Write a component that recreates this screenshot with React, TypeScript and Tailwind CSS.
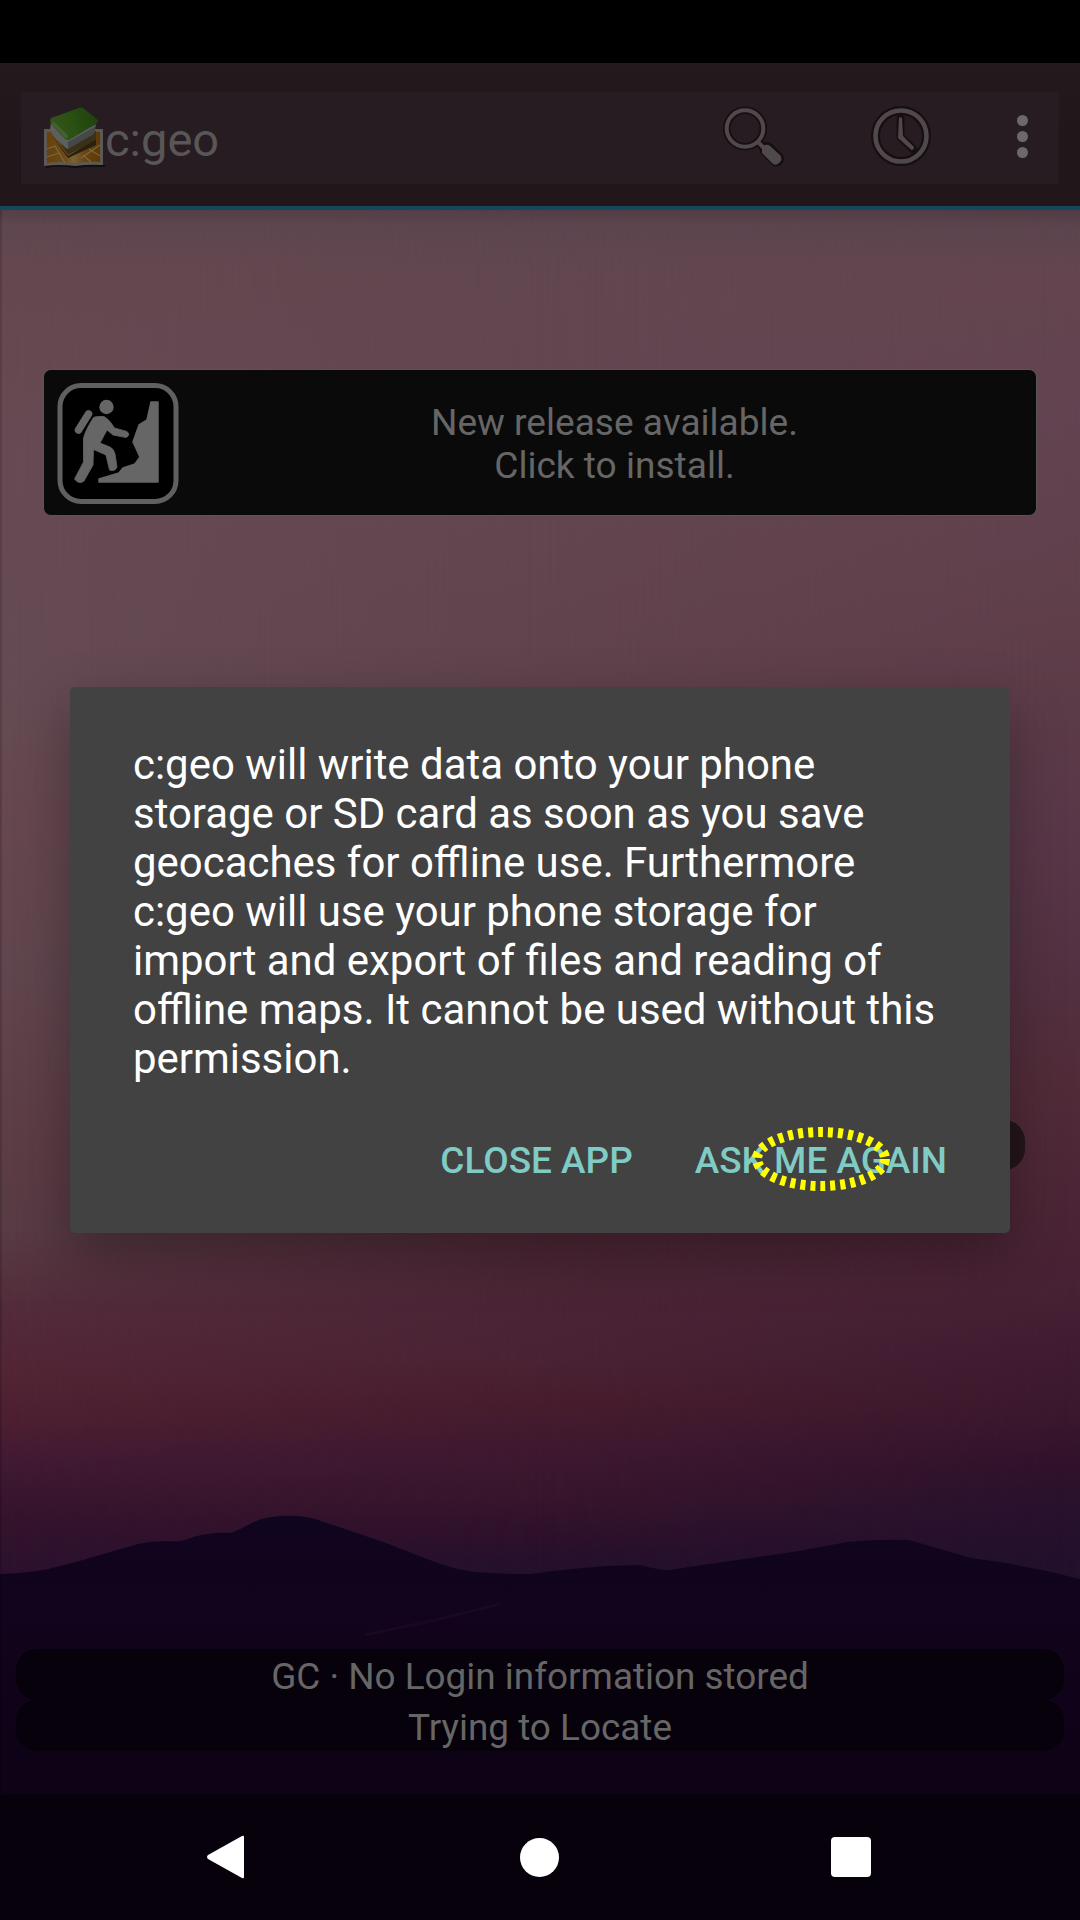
function Backdrop() {
  return (
    <div className="absolute inset-x-0 top-[210px] h-[1710px] overflow-hidden">
      <div className="absolute inset-0 bg-[linear-gradient(to_bottom,#5b454e_0px,#624750_60px,#634650_290px,#60434d_480px,#5a3c48_700px,#532f3d_900px,#4d2835_1010px,#4b2536_1090px,#4a2334_1150px,#481d2d_1190px,#3f1930_1240px,#37152b_1290px,#2f112b_1320px,#29102c_1340px,#22102c_1370px)]" />
      <div className="absolute inset-0 bg-[linear-gradient(to_bottom,#5d464f_0px,#65484f_60px,#674a53_250px,#654b53_490px,#66484f_600px,#61464e_760px,#5c3d45_950px,#583c45_1020px,#532b3a_1100px,#522434_1170px,#4c1e30_1215px,#411a32_1250px,#34132c_1310px,#2c112e_1360px)] [mask-image:linear-gradient(to_right,black,transparent_50%)]" />
      <div className="absolute inset-0 bg-[linear-gradient(to_bottom,#59434c_0px,#63454f_60px,#624351_200px,#60404b_370px,#5c3b48_500px,#583648_640px,#533142_760px,#512b38_870px,#4c2636_980px,#472134_1080px,#401b31_1140px,#3b182d_1200px,#2f112b_1260px,#28112d_1300px,#22102c_1350px)] [mask-image:linear-gradient(to_left,black,transparent_50%)]" />
      <div className="absolute inset-x-0 top-0 h-4 bg-linear-to-b from-black/10 to-transparent" />
      <svg className="absolute inset-0" width="1080" height="1710" viewBox="0 210 1080 1710">
        <defs>
          <linearGradient id="hill" x1="0" y1="1516" x2="0" y2="1800" gradientUnits="userSpaceOnUse">
            <stop offset="0" stopColor="#10051f" />
            <stop offset="0.5" stopColor="#11031a" />
            <stop offset="1" stopColor="#0d0216" />
          </linearGradient>
        </defs>
        <path
          fill="url(#hill)"
          d="M0 1574Q30 1573 48 1569L76 1562L103 1554L138 1544Q152 1541 165 1541Q180 1542 185 1540Q198 1535 207 1534Q222 1532 231 1533Q239 1530 248 1525Q261 1518 272 1517Q284 1515 296 1516Q312 1517 324 1522L351 1531L386 1543L427 1559Q455 1570 475 1572Q500 1574 530 1574Q550 1571 572 1569L606 1566L640 1565Q658 1570 670 1570L702 1565L751 1558L799 1551L847 1542Q880 1539 909 1540Q920 1543 930 1546L971 1558L1006 1563L1047 1571L1080 1579V1920H0Z"
        />
        <path d="M365 1635L435 1620L500 1604" stroke="#1b0a24" strokeWidth="3" fill="none" opacity=".8" />
      </svg>
      <div className="absolute inset-y-0 left-0 w-[2px] bg-black/15" />
    </div>
  );
}

function Logo() {
  return (
    <svg width="64" height="64" viewBox="0 0 64 64" className="block">
      <defs>
        <linearGradient id="cover" x1="8" y1="25" x2="52" y2="10" gradientUnits="userSpaceOnUse">
          <stop offset="0" stopColor="#36551a" />
          <stop offset="0.5" stopColor="#2a5013" />
          <stop offset="1" stopColor="#1f430f" />
        </linearGradient>
        <linearGradient id="map" x1="0" x2="1" y1="0" y2="0">
          <stop offset="0" stopColor="#65410c" />
          <stop offset="0.35" stopColor="#6f4b17" />
          <stop offset="0.5" stopColor="#7a6234" />
          <stop offset="0.7" stopColor="#6b450f" />
          <stop offset="1" stopColor="#5d3906" />
        </linearGradient>
      </defs>
      <path d="M3 61Q15 58 32 61Q48 59 62 60V58H3Z" fill="#120d0f" />
      <path d="M1 22H60V58Q46 57 32 59Q16 57 1 59Z" fill="#5c5955" />
      <path d="M4 25H57V55Q46 54 32 56Q16 54 4 56Z" fill="url(#map)" />
      <path d="M4 42L12 39L22 56M4 50L16 46M57 38L38 51M46 42L57 49M40 48L48 55" stroke="#80714d" strokeWidth="1.2" fill="none" opacity=".8" />
      <path d="M8 27L25 49L53 32V38L25 51Z" fill="#25200f" />
      <path d="M9 24L25 48L53 33V24L30 35Z" fill="#3b3016" />
      <path d="M8 15L7 22Q9 29 14 33L24 42L50 27L53 17L24 32Z" fill="#5d5e5e" />
      <path d="M25 35L53 19L51 27L25 42Z" fill="#464848" />
      <path d="M8 11L36 1Q38 0 40 1L54 12Q56 15 53 17L26 33Q23 34 20 30L9 18Q6 14 8 11Z" fill="url(#cover)" />
      <path d="M9 17L20 29Q23 33 25 30L24 27L10 14Z" fill="#426030" />
    </svg>
  );
}

function SearchIcon() {
  return (
    <svg width="64" height="64" viewBox="0 0 64 64">
      <g fill="none" stroke="#170e11" strokeLinecap="round" strokeLinejoin="round">
        <circle cx="23" cy="23.5" r="18.3" strokeWidth="7.5" />
        <path d="M36 37L42 43" strokeWidth="8" />
        <path d="M45 44.500L54.500 54" strokeWidth="15" />
      </g>
      <circle cx="23" cy="23.500" r="18.300" fill="none" stroke="#4f494b" strokeWidth="4" />
      <path d="M36 37L42 43" stroke="#4f494b" strokeWidth="4" />
      <path d="M40 44Q39 41 43 40Q46 39 48 41L58 50Q61 54 58 57Q55 61 51 59L40 48Z" fill="#4f494b" />
    </svg>
  );
}

function ClockIcon() {
  return (
    <svg width="62" height="62" viewBox="0 0 62 62">
      <circle cx="31" cy="31" r="25.500" fill="none" stroke="#170e11" strokeWidth="9" />
      <circle cx="31" cy="31" r="25.500" fill="none" stroke="#4f494b" strokeWidth="4.600" />
      <path d="M30.500 14V32L43 44" fill="none" stroke="#170e11" strokeWidth="8" strokeLinecap="round" strokeLinejoin="round" />
      <path d="M29 12.500H32L33 31L44 42Q44 45 41.500 45L28 33Z" fill="#4f494b" />
    </svg>
  );
}

function HikerIcon() {
  return (
    <svg width="122" height="122" viewBox="0 0 122 122" className="block">
      <rect x="3" y="3.500" width="116" height="116" rx="21" fill="#000" stroke="#606060" strokeWidth="5" />
      <g fill="#666" stroke="#666" strokeLinecap="round" strokeLinejoin="round">
        <circle cx="49.500" cy="25" r="7.200" stroke="none" />
        <path d="M31.500 32L21.500 48" strokeWidth="7.500" fill="none" />
        <path d="M41 34.500L47 34.500Q53 38 57.500 46L70 49.500Q74 53 69 55.500L56 53L50 48L43 61L53 65Q57 67 58 72L60 85Q58 90 52.500 88L49 73L36.500 67.500L36 83L27 99Q22 103 17.500 97L26.500 80V56Q29 47 36.500 35.500Z" strokeWidth="0.800" />
        <path d="M94 20H101V100H42V97L62 91L66 86L78 82L83 75L76 60L82 43L90 38Z" strokeWidth="1.500" />
      </g>
    </svg>
  );
}

function Header() {
  return (
    <header className="relative h-[147px] border-b-4 border-[#17475c] bg-linear-to-b from-[#231a1d] via-[#21171a] to-[#21161a] px-[21px] pt-[29px]">
      <div className="flex h-[92px] items-start bg-[#271c21] pl-[22px]">
        <div className="pt-[15px]">
          <Logo />
        </div>
        <div className="-ml-[2px] mt-[20px] text-[47px] leading-[56px] text-[#595656]">c:geo</div>
        <div className="ml-auto flex">
          <div className="mt-[13px] mr-[84px]">
            <SearchIcon />
          </div>
          <div className="mt-[13px] mr-[85px]">
            <ClockIcon />
          </div>
          <div className="mt-[23px] mr-[31px] flex flex-col gap-[5px]">
            <i className="size-[11px] rounded-full bg-[#6b6969]" />
            <i className="size-[11px] rounded-full bg-[#6b6969]" />
            <i className="size-[11px] rounded-full bg-[#6b6969]" />
          </div>
        </div>
      </div>
    </header>
  );
}

function Dialog() {
  return (
    <section className="absolute top-[687px] left-[70px] flex h-[546px] w-[940px] flex-col rounded-[5px] bg-[#424242] px-[63px] pt-[53px] shadow-[0_20px_56px_rgba(0,0,0,0.3)]">
      <p className="text-[41.95px] leading-[49px] whitespace-nowrap text-white">
        c:geo will write data onto your phone
        <br />
        storage or SD card as soon as you save
        <br />
        geocaches for offline use. Furthermore
        <br />
        c:geo will use your phone storage for
        <br />
        import and export of files and reading of
        <br />
        offline maps. It cannot be used without this
        <br />
        permission.
      </p>
      <div className="mt-[56px] flex justify-end gap-[62px] text-[36.95px] leading-[43px] font-medium whitespace-nowrap text-[#80cbc4]">
        <button>CLOSE APP</button>
        <button className="relative">
          ASK ME AGAIN
          <svg className="absolute top-[-14px] right-[54px]" width="144" height="68" viewBox="0 0 144 68">
            <ellipse cx="72" cy="34" rx="64" ry="27" fill="none" stroke="#ff0" strokeWidth="10" strokeDasharray="5 5" />
          </svg>
        </button>
      </div>
    </section>
  );
}

export default function App() {
  return (
    <div className="relative flex h-[1920px] w-[1080px] flex-col overflow-hidden bg-black font-[Roboto,sans-serif]">
      <Backdrop />
      <div className="h-[63px] bg-black" />
      <Header />
      <main className="relative flex flex-1 flex-col pt-[159px]">
        <div className="mx-[43px] flex h-[147px] items-center rounded-[8px] border border-[#5a5657] bg-[#0a0a0a] pl-[13px] text-[#666]">
          <HikerIcon />
          <div className="mt-[2px] flex-1 pr-[30px] pl-[44px] text-center text-[37.1px] leading-[43px]">
            New release available.
            <br />
            Click to install.
          </div>
        </div>
        <div className="mt-[604px] mr-[55px] h-[50px] w-[500px] self-end rounded-[21px] bg-[#24151b]" />
        <div className="mx-[16px] mt-auto mb-[43px] text-center text-[36.9px] leading-[51px] text-[#666]">
          <div className="h-[51px] rounded-[21px] bg-[#06010b]">
            <span className="relative top-[2px]">GC · No Login information stored</span>
          </div>
          <div className="h-[51px] rounded-[21px] bg-[#06010b]">
            <span className="relative top-[2px]">Trying to Locate</span>
          </div>
        </div>
      </main>
      <nav className="relative flex h-[126px] items-center bg-[#06010b] pl-[206px]">
        <svg width="39" height="44" viewBox="0 0 39 44">
          <path d="M36 1Q38 0 38 2V42Q38 44 36 43L2 24Q0 22 2 20Z" fill="#fff" />
        </svg>
        <div className="ml-[275px] size-[39px] rounded-full bg-white" />
        <div className="ml-[272px] size-[40px] rounded-[4px] bg-white" />
      </nav>
      <Dialog />
    </div>
  );
}
